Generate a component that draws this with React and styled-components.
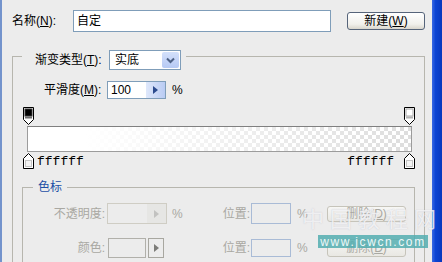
import React from 'react'
import styled, { createGlobalStyle } from 'styled-components'

const GlobalStyle = createGlobalStyle`
  html, body {
    margin: 0;
    padding: 0;
    background: #ececec;
  }
  body {
    font-family: "Liberation Sans", "Noto Sans CJK SC", sans-serif;
    font-size: 12px;
    line-height: 14px;
    color: #000;
  }
`

const Page = styled.div`
  position: relative;
  display: flex;
  width: 442px;
  height: 262px;
  overflow: hidden;
  background: #ececec;
`

const LeftEdge = styled.div`
  flex: none;
  width: 2px;
  background: #7393cc;
`

const Frame = styled.div`
  flex: none;
  width: 10px;
  background: linear-gradient(to right, #3a6ae4, #0c44d4 35%, #0838bc);
`

const Dialog = styled.div`
  flex: 1;
  min-width: 0;
  display: flex;
  flex-direction: column;
  padding: 10px 0 0 10px;
`

const Row = styled.div`
  display: flex;
  align-items: center;
  flex: none;
  height: ${p => p.h || 20}px;
  margin-top: ${p => p.mt || 0}px;
  padding-left: ${p => p.pl || 0}px;
`

const Label = styled.span`
  flex: none;
  width: ${p => p.w}px;
  text-align: ${p => p.right ? 'right' : 'left'};
  color: ${p => p.dim ? '#a9a8a2' : '#000'};
  white-space: nowrap;
`

const Key = styled.u`
  text-underline-offset: 1px;
`

const TextInput = styled.div`
  flex: none;
  box-sizing: border-box;
  width: 258px;
  height: 22px;
  display: flex;
  align-items: center;
  padding-left: 3px;
  border: 1px solid #7f9db9;
  background: #fff;
`

const PushButton = styled.div`
  flex: none;
  box-sizing: border-box;
  width: ${p => p.w}px;
  height: ${p => p.h}px;
  margin-left: ${p => p.ml}px;
  display: flex;
  align-items: center;
  justify-content: center;
  border: 1px solid ${p => p.dim ? '#c6c4ba' : '#56647a'};
  border-radius: 3px;
  background: ${p => p.dim
    ? 'linear-gradient(#f7f7f5, #e9e8e3)'
    : 'linear-gradient(#ffffff, #f1f0ec 70%, #d9d6cc)'};
  color: ${p => p.dim ? '#a9a8a2' : '#000'};
  white-space: nowrap;
`

const GroupBox = styled.fieldset`
  flex: none;
  box-sizing: border-box;
  width: ${p => p.w}px;
  height: ${p => p.h}px;
  margin: ${p => p.mt}px 0 0 ${p => p.ml || 0}px;
  padding: 0;
  min-inline-size: 0;
  border: 1px solid #b7b6ae;
`

const GroupLegend = styled.legend`
  margin-left: ${p => p.ml}px;
  padding: ${p => p.pad};
  color: ${p => p.blue ? '#1d4fa6' : '#000'};
`

const LegendInner = styled.div`
  display: flex;
  align-items: center;
  height: 20px;
`

const Select = styled.div`
  flex: none;
  box-sizing: border-box;
  width: 72px;
  height: 20px;
  display: flex;
  align-items: center;
  padding: 1px 1px 1px 5px;
  border: 1px solid #7f9db9;
  background: #fff;
`

const DropButton = styled.div`
  margin-left: auto;
  width: 17px;
  height: 100%;
  display: flex;
  align-items: center;
  justify-content: center;
  border-radius: 2px;
  background: linear-gradient(#d3e0fb, #b6c9f4);
`

const SpinField = styled.div`
  flex: none;
  box-sizing: border-box;
  width: ${p => p.w}px;
  height: ${p => p.h}px;
  display: flex;
  align-items: center;
  padding-left: 3px;
  border: 1px solid ${p => p.dim ? '#cfcdc4' : '#7f9db9'};
  background: ${p => p.dim ? '#ececec' : '#fff'};
`

const SpinButton = styled.div`
  margin-left: auto;
  width: 19px;
  height: 100%;
  display: flex;
  align-items: center;
  justify-content: center;
  background: ${p => p.dim
    ? '#e6e6e4'
    : 'linear-gradient(to right, #dfe8fb, #b9cbf3)'};
`

const Percent = styled.span`
  flex: none;
  width: ${p => p.w}px;
  margin-left: ${p => p.ml}px;
  color: ${p => p.dim ? '#a9a8a2' : '#000'};
`

const Stops = styled.div`
  flex: none;
  display: flex;
  flex-direction: column;
  width: 392px;
  margin: 8px 0 0 10px;
`

const StopRow = styled.div`
  display: flex;
  align-items: center;
  justify-content: space-between;
  height: ${p => p.h}px;
`

const GradientBar = styled.div`
  box-sizing: border-box;
  width: 385px;
  height: 26px;
  margin: 1px 0 0 4px;
  border: 1px solid #9c9c9c;
  border-top-color: #808080;
  background-image:
    linear-gradient(to right, #fff 15%, rgba(255, 255, 255, 0.25)),
    conic-gradient(#d2d2d2 25%, #fff 0 50%, #d2d2d2 0 75%, #fff 0);
  background-size: 100% 100%, 8px 8px;
`

const StopSide = styled.div`
  display: flex;
  align-items: center;
  gap: ${p => p.gap}px;
`

const HexText = styled.span`
  font-family: "Liberation Mono", monospace;
  font-size: 13px;
  line-height: 14px;
  margin-top: 3px;
`

const FieldBox = styled.div`
  flex: none;
  width: 60px;
  height: 100%;
  display: flex;
  align-items: center;
  gap: 2px;
  padding-left: 1px;
  box-sizing: border-box;
`

const Swatch = styled.div`
  box-sizing: border-box;
  width: ${p => p.w}px;
  height: 100%;
  display: flex;
  align-items: center;
  justify-content: center;
  border: 1px solid ${p => p.border};
  background: #ececec;
`

const PosInput = styled.div`
  flex: none;
  box-sizing: border-box;
  width: 40px;
  height: ${p => p.h}px;
  margin-left: 1px;
  border: 1px solid #a9bbd6;
  background: #ececec;
`

const Watermark = styled.div`
  position: absolute;
  left: 296px;
  top: 200px;
  width: 136px;
  height: 52px;
  pointer-events: none;
`

const WatermarkHan = styled.div`
  position: absolute;
  left: 6px;
  top: 4px;
  display: flex;
  gap: 6px;
  font-family: "Noto Sans CJK SC", sans-serif;
  font-size: 22px;
  line-height: 26px;
  color: rgba(255, 255, 255, 0.75);
  text-shadow: 0 0 1px rgba(150, 150, 170, 0.55);
`

const WatermarkUrl = styled.div`
  position: absolute;
  left: 22px;
  top: 35px;
  width: 110px;
  height: 13px;
  display: flex;
  align-items: center;
  justify-content: center;
  background: rgba(84, 174, 176, 0.85);
  color: #eef8f8;
  font-family: "Liberation Sans", sans-serif;
  font-size: 12px;
  letter-spacing: 1.6px;
`

const Arrow = ({ color }) => (
  <svg width="5" height="8" viewBox="0 0 5 8">
    <path d="M0 0L5 4L0 8Z" fill={color} />
  </svg>
)

const Chevron = () => (
  <svg width="9" height="7" viewBox="0 0 9 7">
    <path d="M1 1.5L4.5 5L8 1.5" fill="none" stroke="#4d6185" strokeWidth="2" />
  </svg>
)

const OpacityStop = ({ dark }) => (
  <svg width="11" height="18" viewBox="0 0 11 18">
    <path d="M0.5 0.5H10.5V12.5L5.5 17.5L0.5 12.5Z" fill="#fff" stroke="#000" />
    <rect x="2" y="2" width="7" height="7" fill={dark ? '#000' : '#fff'} stroke={dark ? '#333' : '#aaa'} />
    <rect x="2" y="9.5" width="7" height="2" fill={dark ? '#6e6e6e' : '#b4b4b4'} />
  </svg>
)

const ColorStop = () => (
  <svg width="11" height="16" viewBox="0 0 11 16">
    <path d="M5.5 0.5L10.5 5.5V15.5H0.5V5.5Z" fill="#fff" stroke="#000" />
    <rect x="2.5" y="7.5" width="6" height="6" fill="#f4f4f4" stroke="#c4c4c4" />
  </svg>
)

const App = () => (
  <Page>
    <GlobalStyle />
    <LeftEdge />
    <Dialog>
      <Row h={22}>
        <Label w={61}>名称(<Key>N</Key>):</Label>
        <TextInput>自定</TextInput>
        <PushButton w={78} h={18} ml={16}>新建(<Key>W</Key>)</PushButton>
      </Row>

      <GroupBox w={413} h={240} mt={10}>
        <GroupLegend ml={9} pad="8px 5px 0 13px">
          <LegendInner>
            <Label w={74}>渐变类型(<Key>T</Key>):</Label>
            <Select>
              实底
              <DropButton><Chevron /></DropButton>
            </Select>
          </LegendInner>
        </GroupLegend>

        <Row h={18} mt={11} pl={31}>
          <Label w={63}>平滑度(<Key>M</Key>):</Label>
          <SpinField w={59} h={18}>
            100
            <SpinButton><Arrow color="#2b4a8e" /></SpinButton>
          </SpinField>
          <Percent w={20} ml={6}>%</Percent>
        </Row>

        <Stops>
          <StopRow h={18}>
            <OpacityStop dark />
            <OpacityStop />
          </StopRow>
          <GradientBar />
          <StopRow h={17}>
            <StopSide gap={3}>
              <ColorStop />
              <HexText>ffffff</HexText>
            </StopSide>
            <StopSide gap={10}>
              <HexText>ffffff</HexText>
              <ColorStop />
            </StopSide>
          </StopRow>
        </Stops>

        <GroupBox w={393} h={110} mt={11} ml={9}>
          <GroupLegend ml={10} pad="0 5px" blue>色标</GroupLegend>

          <Row h={21} mt={9}>
            <Label w={82} right dim>不透明度:</Label>
            <SpinField w={60} h={21} dim style={{ marginLeft: 2 }}>
              <SpinButton dim><Arrow color="#c2c2c0" /></SpinButton>
            </SpinField>
            <Percent w={25} ml={5} dim>%</Percent>
            <Label w={53} right dim>位置:</Label>
            <PosInput h={21} />
            <Percent w={20} ml={6} dim>%</Percent>
            <PushButton w={79} h={16} ml={10} dim>删除(<Key>D</Key>)</PushButton>
          </Row>

          <Row h={20} mt={14}>
            <Label w={82} right dim>颜色:</Label>
            <FieldBox style={{ marginLeft: 2 }}>
              <Swatch w={38} border="#b1b0aa" />
              <Swatch w={16} border="#a8a7a0"><Arrow color="#7c7c78" /></Swatch>
            </FieldBox>
            <Percent w={25} ml={5} />
            <Label w={53} right dim>位置:</Label>
            <PosInput h={18} />
            <Percent w={20} ml={6} dim>%</Percent>
            <PushButton w={79} h={18} ml={10} dim>删除(<Key>D</Key>)</PushButton>
          </Row>
        </GroupBox>
      </GroupBox>
    </Dialog>
    <Frame />

    <Watermark>
      <WatermarkHan>
        <span>中</span><span>国</span><span>教</span><span>程</span><span>网</span>
      </WatermarkHan>
      <WatermarkUrl>www.jcwcn.com</WatermarkUrl>
    </Watermark>
  </Page>
)

export default App
